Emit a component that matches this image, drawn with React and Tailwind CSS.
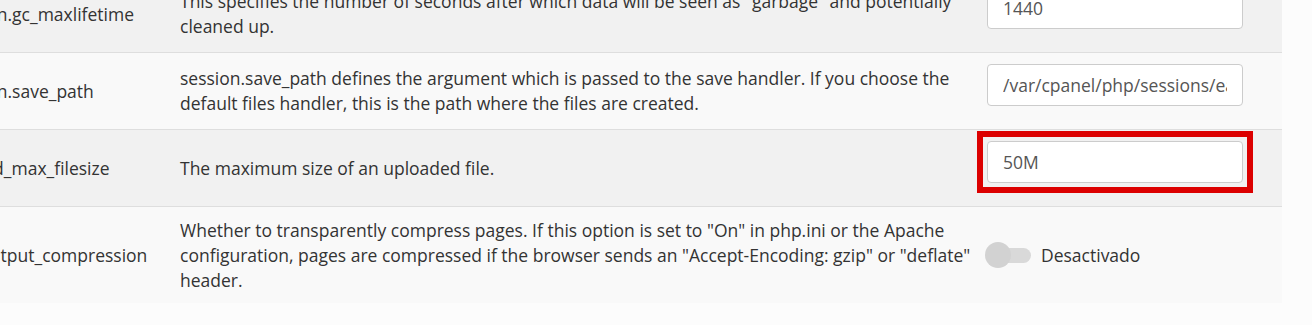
const rows = [
  {
    name: 'session.gc_maxlifetime',
    desc: ['This specifies the number of seconds after which data will be seen as "garbage" and potentially', 'cleaned up.'],
    value: '1440',
    striped: true,
  },
  {
    name: 'session.save_path',
    desc: ['session.save_path defines the argument which is passed to the save handler. If you choose the', 'default files handler, this is the path where the files are created.'],
    value: '/var/cpanel/php/sessions/ea-php74',
  },
  {
    name: 'upload_max_filesize',
    desc: ['The maximum size of an uploaded file.'],
    value: '50M',
    striped: true,
    highlight: true,
  },
]

const TextInput = ({ value, highlight }) => (
  <div className="relative w-[256px]">
    {highlight && (
      <div className="absolute -inset-[10px] border-[6px] border-[#dc0000] pointer-events-none" />
    )}
    <input
      readOnly
      value={value}
      className="w-full h-[42px] px-[15px] bg-white border border-[#cccccc] rounded-[4px] text-[17.5px] text-[#555555] outline-none"
    />
  </div>
)

const Row = ({ row }) => (
  <div
    className={`flex h-[77px] border-b border-[#dedede] ${row.striped ? 'bg-[#f1f1f1]' : 'bg-[#f9f9f9]'}`}
  >
    <div className="w-[233px] shrink-0 flex items-center whitespace-nowrap">{row.name}</div>
    <div className="w-[790px] shrink-0 flex items-center">
      <p>
        {row.desc.map((line, i) => (
          <span key={i} className="block whitespace-nowrap">{line}</span>
        ))}
      </p>
    </div>
    <div className="pl-[17px] pt-[11px]">
      <TextInput value={row.value} highlight={row.highlight} />
    </div>
  </div>
)

export default function App() {
  return (
    <div
      className="w-full h-[325px] overflow-hidden bg-[#fcfcfc] text-[17.5px] leading-[25px] text-[#333333]"
      style={{ fontFamily: '"Open Sans", "Noto Sans", sans-serif' }}
    >
      <div className="w-[1335px] ml-[-53px] mt-[-24px]">
        {rows.map((row) => (
          <Row key={row.name} row={row} />
        ))}

        {/* output compression */}
        <div className="flex h-[96px] bg-[#f9f9f9]">
          <div className="w-[233px] shrink-0 flex items-center whitespace-nowrap">zlib.output_compression</div>
          <div className="w-[790px] shrink-0 flex items-center">
            <p>
              <span className="block whitespace-nowrap">Whether to transparently compress pages. If this option is set to "On" in php.ini or the Apache</span>
              <span className="block whitespace-nowrap">configuration, pages are compressed if the browser sends an "Accept-Encoding: gzip" or "deflate"</span>
              <span className="block whitespace-nowrap">header.</span>
            </p>
          </div>
          <div className="pl-[15px] flex items-center gap-[10px]">
            <div className="relative w-[46px] h-[26px] flex items-center">
              <div className="absolute left-[14px] right-0 h-[15px] rounded-full bg-[#d9d9d9]" />
              <div className="relative w-[26px] h-[26px] rounded-full bg-[#d2d2d2]" />
            </div>
            <span>Desactivado</span>
          </div>
        </div>
      </div>
    </div>
  )
}
